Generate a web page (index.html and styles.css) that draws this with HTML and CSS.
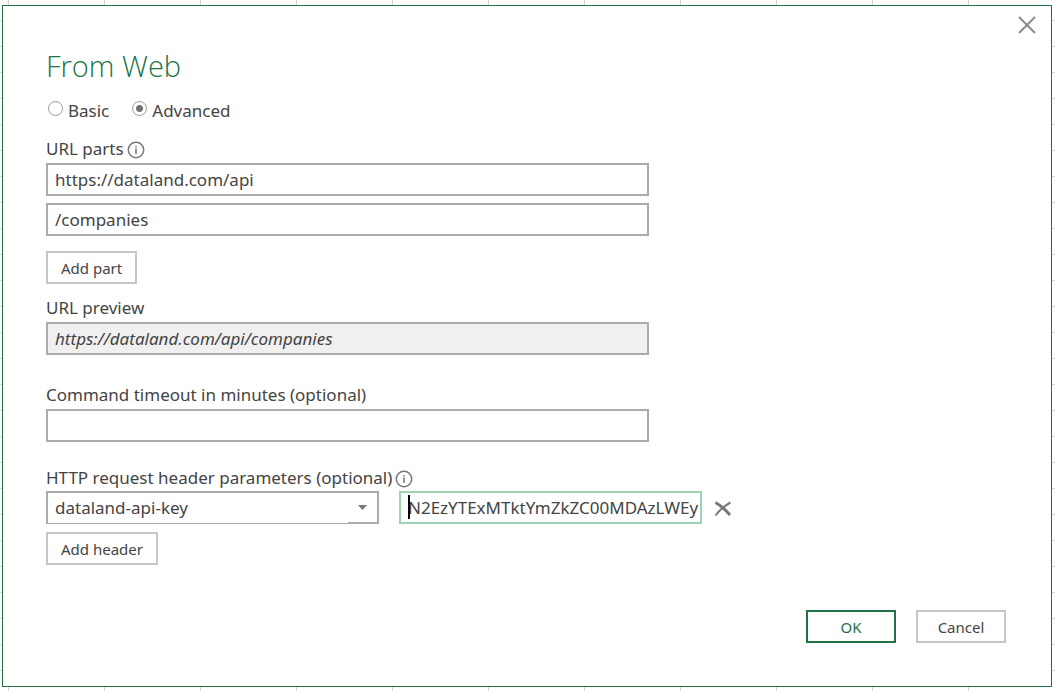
FILE: index.html
```html
<!DOCTYPE html>
<html lang="en">
<head>
<meta charset="utf-8">
<title>From Web</title>
<link rel="stylesheet" href="styles.css">
</head>
<body>
<main class="dialog">
  <button class="close" type="button" aria-label="Close">
    <svg width="18" height="18" viewBox="0 0 18 18"><path d="M1 1 17 17M17 1 1 17"/></svg>
  </button>
  <form class="form">
    <h1 class="title">From Web</h1>
    <div class="modes">
      <label class="mode"><input class="radio" type="radio" name="mode">Basic</label>
      <label class="mode"><input class="radio" type="radio" name="mode" checked>Advanced</label>
    </div>

    <section class="group">
      <div class="caption">
        <label for="part1">URL parts</label>
        <svg class="info" width="18" height="18" viewBox="0 0 18 18"><circle cx="9" cy="9" r="7.7"/><path d="M9 7.6V13M9 5V6.5"/></svg>
      </div>
      <div class="parts">
        <input class="field" id="part1" type="text" value="https://dataland.com/api">
        <input class="field" type="text" aria-label="URL part 2" value="/companies">
      </div>
      <button class="button add-part" type="button">Add part</button>
    </section>

    <section class="group preview">
      <div class="caption"><label for="preview">URL preview</label></div>
      <input class="field readonly" id="preview" type="text" readonly value="https://dataland.com/api/companies">
    </section>

    <section class="group timeout">
      <div class="caption"><label for="timeout">Command timeout in minutes (optional)</label></div>
      <input class="field" id="timeout" type="text">
    </section>

    <section class="group headers">
      <div class="caption">
        <label for="header">HTTP request header parameters (optional)</label>
        <svg class="info" width="18" height="18" viewBox="0 0 18 18"><circle cx="9" cy="9" r="7.7"/><path d="M9 7.6V13M9 5V6.5"/></svg>
      </div>
      <div class="header-row">
        <div class="combo">
          <select class="field select" id="header"><option>dataland-api-key</option></select>
          <svg class="arrow" width="9" height="5" viewBox="0 0 9 5"><path d="M0 0H9L4.500 5Z"/></svg>
        </div>
        <div class="value">
          <input class="field active" type="text" aria-label="Header value" value="N2EzYTExMTktYmZkZC00MDAzLWEy">
          <span class="caret"></span>
        </div>
        <button class="remove" type="button" aria-label="Remove header">
          <svg width="18" height="16" viewBox="0 0 18 16"><path class="thick" d="M1.500 1.500Q8 5 16 14"/><path class="thin" d="M16.500 1.500Q8 6 1.500 14.500"/></svg>
        </button>
      </div>
      <button class="button add-header" type="button">Add header</button>
    </section>
  </form>
  <footer class="actions">
    <button class="button action primary" type="button">OK</button>
    <button class="button action" type="button">Cancel</button>
  </footer>
</main>
</body>
</html>
```
FILE: styles.css
```css
* { box-sizing: border-box; }

body {
  margin: 0;
  min-height: 100vh;
  padding: 5px 3px 4px 2px;
  display: flex;
  background:
    repeating-linear-gradient(to right, transparent 0 8px, #d4d4d4 8px 9px, transparent 9px 96px),
    repeating-linear-gradient(to bottom, transparent 0 20px, #d4d4d4 20px 21px, transparent 21px 26px),
    #fff;
  font: 17px/24px "Noto Sans", "Open Sans", sans-serif;
  color: #444;
}

input, select, button { font: inherit; color: inherit; margin: 0; }

.dialog {
  position: relative;
  flex: 1;
  display: flex;
  flex-direction: column;
  justify-content: space-between;
  padding: 40px 45px 43px 43px;
  border: 1px solid #217346;
  background: #fff;
}

.close, .remove { display: flex; padding: 0; border: 0; background: none; }
.close { position: absolute; top: 10px; right: 15px; }
.close path { stroke: #8a8a8a; stroke-width: 2; fill: none; }

.form { display: flex; flex-direction: column; }

.title {
  margin: 0;
  font: 300 29px/40px "Open Sans", "Noto Sans", sans-serif;
  color: #217346;
}

.modes { display: flex; gap: 21px; margin-top: 13px; }
.mode { display: flex; gap: 5px; }
.radio {
  appearance: none;
  width: 15px;
  height: 15px;
  margin: 2px 0 0 2px;
  border: 1px solid #999;
  border-radius: 50%;
  background: #fff;
}
.radio:checked { background: radial-gradient(circle, #707070 0 3px, #fff 4px); }

.group { display: flex; flex-direction: column; align-items: flex-start; margin-top: 14px; }
.preview { margin-top: 12px; }
.timeout { margin-top: 28px; }
.headers { margin-top: 24px; }

.caption { display: flex; gap: 3px; margin-bottom: 2px; align-items: center; }
.headers .caption { margin-bottom: 1px; }
.info { margin-top: 2px; fill: none; stroke: #777; stroke-width: 1.500; }

.parts { display: flex; flex-direction: column; gap: 7px; width: 100%; }
.field {
  width: 100%;
  max-width: 603px;
  height: 33px;
  padding: 0 7px;
  border: 2px solid #ababab;
  border-radius: 0;
  background: #fff;
  outline: 0;
}
.readonly { background: #f0f0f0; font-style: italic; }

.button {
  height: 33px;
  padding: 0 13px;
  border: 2px solid #c6c6c6;
  background: #fff;
  font-size: 15px;
}
.add-part { margin-top: 15px; }
.add-header { margin-top: 8px; }

.header-row { display: flex; align-items: center; width: 100%; }
.combo { position: relative; width: 333px; height: 33px; margin-right: 20px; }
.combo::after {
  content: "";
  position: absolute;
  left: 2px;
  bottom: 1px;
  width: 300px;
  height: 1px;
  background: #fff;
}
.select { appearance: none; }
.arrow { position: absolute; right: 12px; top: 14px; fill: #777; }
.value { position: relative; width: 303px; height: 33px; }
.active { border-color: #9bd3b3; padding-right: 0; }
.caret { position: absolute; left: 9px; top: 4px; width: 2px; height: 24px; background: #000; }
.remove { margin: 2px 0 0 12px; }
.remove path { fill: none; stroke: #777; }
.thick { stroke-width: 3; }
.thin { stroke-width: 2; }

.actions { display: flex; justify-content: flex-end; gap: 20px; }
.action { width: 90px; }
.primary { border-color: #217346; color: #217346; }
```
